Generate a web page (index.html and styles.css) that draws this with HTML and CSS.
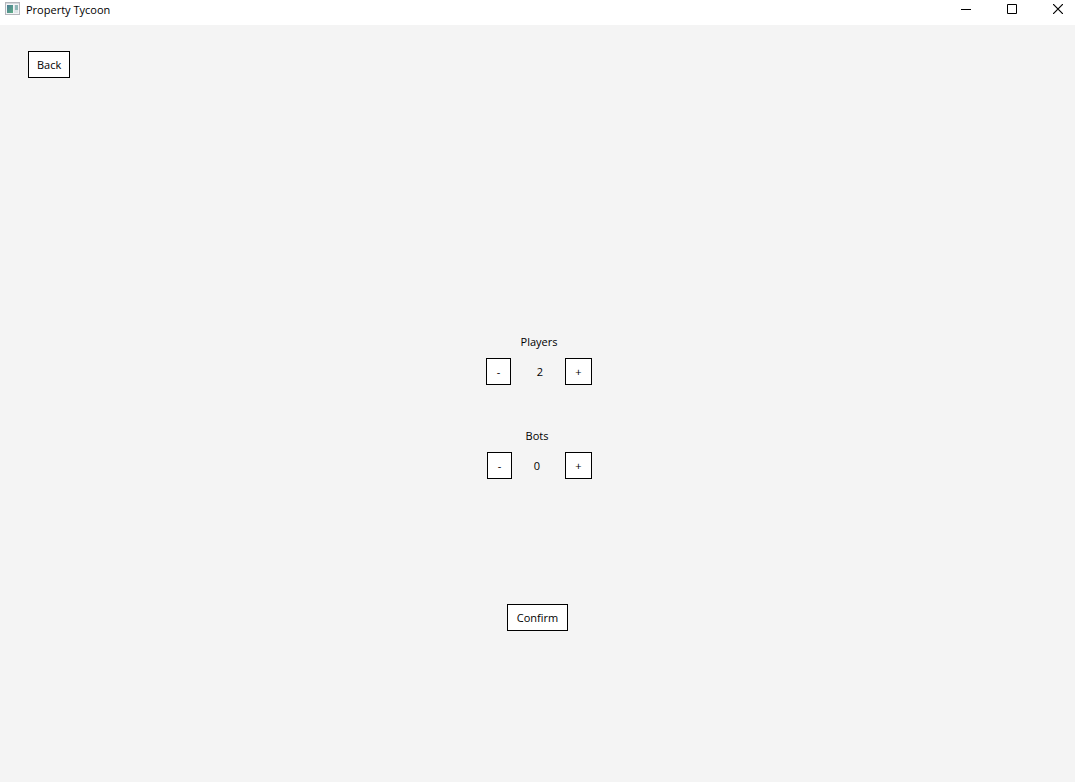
FILE: index.html
```html
<!DOCTYPE html>
<html lang="en">
<head>
<meta charset="utf-8">
<title>Property Tycoon</title>
<link rel="stylesheet" href="styles.css">
</head>
<body>
<header class="titlebar">
  <svg class="app-icon" width="16" height="14" viewBox="0 0 16 14" aria-hidden="true">
    <defs>
      <linearGradient id="pane" x1="0" y1="0" x2="1" y2="1">
        <stop offset="0" stop-color="#4a7c94"/>
        <stop offset="1" stop-color="#5fae86"/>
      </linearGradient>
    </defs>
    <rect x="0.5" y="0.5" width="14" height="12" fill="#f4f4f6" stroke="#b4b7bc"/>
    <path d="M1 1.5h13" stroke="#d5d8dc"/>
    <rect x="2" y="3" width="6" height="8" fill="url(#pane)"/>
    <rect x="9" y="3" width="1" height="8" fill="#e0e5ea"/>
    <rect x="10" y="3" width="3" height="5" fill="#8fb6b6"/>
    <rect x="10" y="8" width="3" height="3" fill="#dde6e8"/>
  </svg>
  <h1 class="title">Property Tycoon</h1>
  <div class="window-controls">
    <button class="window-button" type="button" aria-label="Minimize">
      <svg width="10" height="10" viewBox="0 0 10 10" shape-rendering="crispEdges"><path d="M0 5.5h10" stroke="#000"/></svg>
    </button>
    <button class="window-button" type="button" aria-label="Maximize">
      <svg width="10" height="10" viewBox="0 0 10 10"><path d="M.5.5h9v9h-9z" fill="none" stroke="#000"/></svg>
    </button>
    <button class="window-button" type="button" aria-label="Close">
      <svg width="10" height="10" viewBox="0 0 10 10"><path d="M0 0l10 10M10 0L0 10" stroke="#000" stroke-width="1.2"/></svg>
    </button>
  </div>
</header>
<main class="screen">
  <button class="button" type="button">Back</button>
  <form class="setup">
    <section class="counter" aria-labelledby="players">
      <h2 class="label" id="players">Players</h2>
      <div class="stepper">
        <button class="button step-down" type="button" aria-label="Fewer players">-</button>
        <output class="value value-players">2</output>
        <button class="button step-up" type="button" aria-label="More players">+</button>
      </div>
    </section>
    <section class="counter" aria-labelledby="bots">
      <h2 class="label label-bots" id="bots">Bots</h2>
      <div class="stepper">
        <button class="button step-down" type="button" aria-label="Fewer bots">-</button>
        <output class="value value-bots">0</output>
        <button class="button step-up" type="button" aria-label="More bots">+</button>
      </div>
    </section>
    <button class="button confirm" type="button">Confirm</button>
  </form>
</main>
</body>
</html>
```
FILE: styles.css
```css
* {
  box-sizing: border-box;
}

body {
  margin: 0;
  min-height: 100vh;
  display: flex;
  flex-direction: column;
  background: #f4f4f4;
  color: #000;
  font: 11px/16px "Open Sans", sans-serif;
}

.titlebar {
  display: flex;
  align-items: flex-start;
  gap: 5px;
  padding: 2px 12px 7px 5px;
  background: #fff;
}

.title {
  flex: 1;
  margin: 0;
  font-size: 11px;
  font-weight: 400;
}

.window-controls {
  display: flex;
  gap: 36px;
}

.window-button {
  display: flex;
  padding: 2px 0;
  border: 0;
  background: none;
}

.screen {
  flex: 1;
  display: flex;
  flex-direction: column;
  align-items: flex-start;
  padding: 26px 28px;
}

.button {
  height: 27px;
  padding: 0 8px;
  border: 1px solid #000;
  background: #fff;
  color: #000;
  font: inherit;
}

.setup {
  align-self: stretch;
  display: flex;
  flex-direction: column;
  align-items: center;
  gap: 43px;
  margin-top: 256px;
}

.counter {
  display: flex;
  flex-direction: column;
  align-items: center;
  gap: 8px;
  padding-left: 3px;
}

.label {
  margin: 0;
  font-size: 11px;
  font-weight: 400;
}

.label-bots {
  padding-right: 4px;
}

.stepper {
  display: flex;
  align-items: center;
  justify-content: flex-end;
  width: 106px;
}

.step-down {
  width: 25px;
}

.step-up {
  width: 27px;
}

.value {
  text-align: center;
}

.value-players {
  width: 54px;
  padding-left: 4px;
}

.value-bots {
  width: 53px;
  padding-right: 3px;
}

.confirm {
  margin-top: 82px;
  padding: 0 9px;
}
```
